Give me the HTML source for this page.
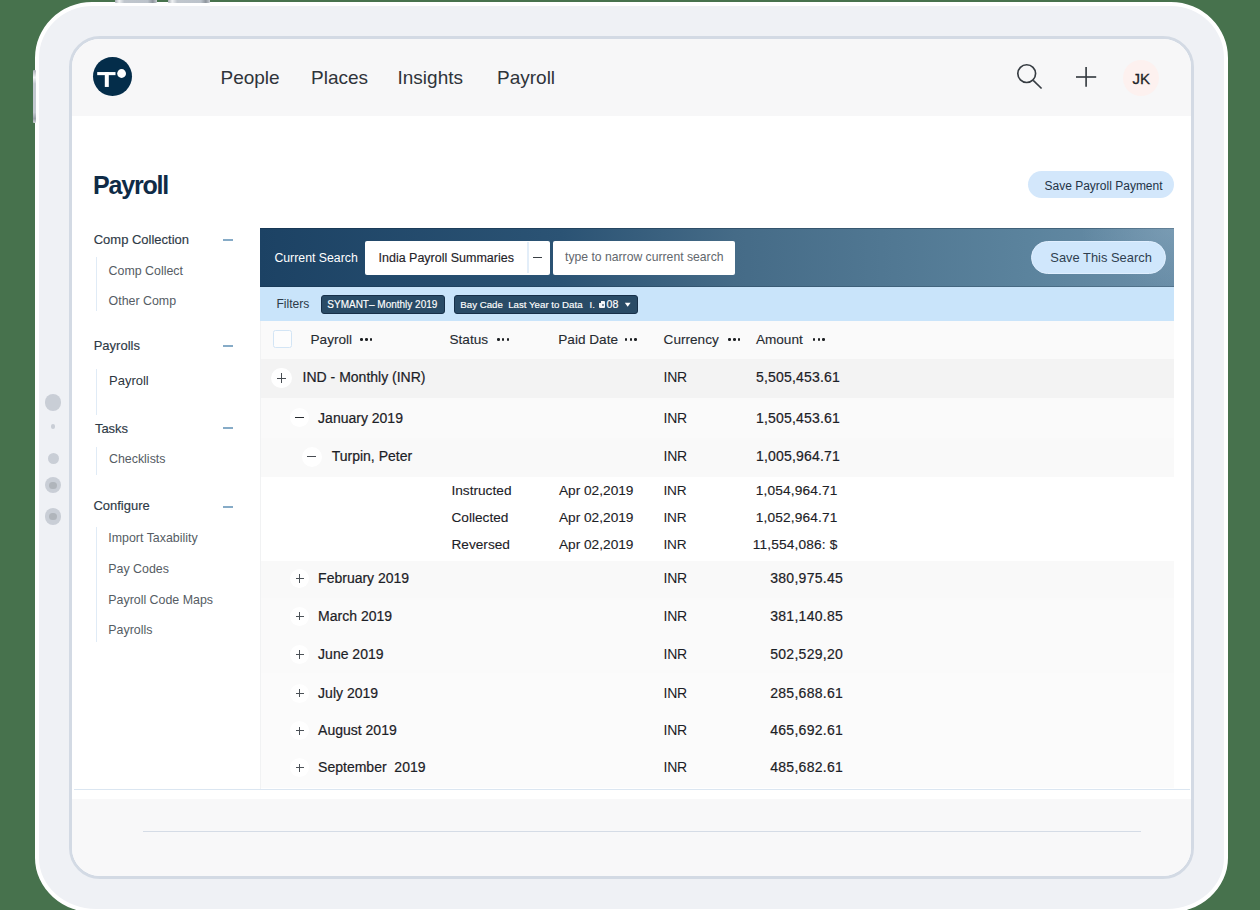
<!DOCTYPE html>
<html><head><meta charset="utf-8"><style>
html,body{margin:0;padding:0;}
body{width:1260px;height:910px;overflow:hidden;position:relative;background:#47724d;font-family:"Liberation Sans",sans-serif;}
.r{position:absolute;box-sizing:border-box;}
.t{position:absolute;line-height:1;white-space:nowrap;}
</style></head><body>
<div class="r" style="left:35px;top:1.5px;width:1193.00px;height:911.00px;background:#eff1f5;border:4px solid #fff;border-radius:57px 57px 61px 61px / 56px 56px 55px 55px;"></div>
<div class="r" style="left:115px;top:0px;width:42.00px;height:2.80px;background:linear-gradient(90deg,#a9afb6,#eef0f2 10%,#c0c6cd 22%,#bcc3cb 78%,#8f969e 90%,#c8cdd3);border-radius:0 0 1px 1px;"></div>
<div class="r" style="left:168px;top:0px;width:42.00px;height:2.80px;background:linear-gradient(90deg,#a9afb6,#eef0f2 10%,#c0c6cd 22%,#bcc3cb 78%,#8f969e 90%,#c8cdd3);border-radius:0 0 1px 1px;"></div>
<div class="r" style="left:32.8px;top:70px;width:3.00px;height:53.00px;background:linear-gradient(180deg,#a9afb6,#f2f4f6 14%,#c3c9d0 26%,#c3c9d0 80%,#9aa1a8 92%,#d0d4d9);border-radius:1px;"></div>
<div class="r" style="left:69px;top:36px;width:1125.00px;height:842.50px;background:#ffffff;border:3px solid #d3dae4;border-radius:31px;overflow:hidden;"></div>
<div class="r" style="left:72px;top:39px;width:1119.00px;height:76.80px;background:#f7f7f8;border-radius:28px 28px 0 0;"></div>
<div class="r" style="left:72px;top:799px;width:1119.00px;height:76.50px;background:#f8f8f9;border-radius:0 0 28px 28px;"></div>
<div class="r" style="left:143px;top:830.5px;width:998.00px;height:1.50px;background:#d5dce6;"></div>
<svg class="r" style="left:92px;top:56px" width="41" height="41" viewBox="0 0 41 41"><circle cx="20.5" cy="20.4" r="19.5" fill="#042d4a"/><rect x="5.2" y="16.05" width="18.3" height="3.1" fill="#fff"/><rect x="12.8" y="16.05" width="4" height="14.9" fill="#fff"/><circle cx="29.6" cy="17.5" r="4.4" fill="#fff"/></svg>
<div class="t" style="top:67.52px;font-size:19px;color:#2f343a;left:220.50px;">People</div>
<div class="t" style="top:67.52px;font-size:19px;color:#2f343a;left:311.00px;">Places</div>
<div class="t" style="top:67.52px;font-size:19px;color:#2f343a;left:397.50px;">Insights</div>
<div class="t" style="top:67.52px;font-size:19px;color:#2f343a;left:497.00px;">Payroll</div>
<svg class="r" style="left:1010px;top:58px" width="40" height="40" viewBox="0 0 40 40"><circle cx="16.7" cy="15.6" r="8.9" fill="none" stroke="#363c42" stroke-width="1.65"/><line x1="23.2" y1="22.3" x2="31.6" y2="30.5" stroke="#363c42" stroke-width="1.65"/></svg>
<svg class="r" style="left:1066px;top:57px" width="40" height="40" viewBox="0 0 40 40"><line x1="10" y1="20" x2="30.2" y2="20" stroke="#363c42" stroke-width="1.65"/><line x1="20.1" y1="10" x2="20.1" y2="29.8" stroke="#363c42" stroke-width="1.65"/></svg>
<div class="r" style="left:1123.00px;top:60.00px;width:36.00px;height:36.00px;border-radius:50%;background:#fdf1ef;"></div>
<div class="t" style="top:71.10px;font-size:15px;color:#1f2327;left:1132.40px;-webkit-text-stroke:0.3px #1f2327;">JK</div>
<div class="t" style="top:172.84px;font-size:25px;color:#0f2b47;font-weight:700;letter-spacing:-1.2px;left:93.00px;">Payroll</div>
<div class="r" style="left:1028px;top:171px;width:146.00px;height:26.70px;background:#d3e7fb;border-radius:14px;"></div>
<div class="t" style="top:180.24px;font-size:12px;color:#243447;left:1044.50px;">Save Payroll Payment</div>
<div class="t" style="top:233.40px;font-size:13px;color:#2e3a46;left:93.70px;-webkit-text-stroke:0.15px #2e3a46;">Comp Collection</div>
<div class="r" style="left:223.0px;top:239px;width:9.80px;height:2.00px;background:#86abc7;"></div>
<div class="r" style="left:95.5px;top:256.7px;width:1.50px;height:54.30px;background:#e0ebf6;"></div>
<div class="t" style="top:264.60px;font-size:12.4px;color:#555c64;left:108.60px;">Comp Collect</div>
<div class="t" style="top:295.00px;font-size:12.4px;color:#555c64;left:108.60px;">Other Comp</div>
<div class="t" style="top:338.90px;font-size:13px;color:#2e3a46;left:93.70px;-webkit-text-stroke:0.15px #2e3a46;">Payrolls</div>
<div class="r" style="left:223.0px;top:345px;width:9.80px;height:2.00px;background:#86abc7;"></div>
<div class="r" style="left:95.5px;top:369.2px;width:1.50px;height:45.70px;background:#e0ebf6;"></div>
<div class="t" style="top:373.70px;font-size:13px;color:#2d3640;left:109.00px;">Payroll</div>
<div class="t" style="top:421.50px;font-size:13px;color:#2e3a46;left:94.90px;-webkit-text-stroke:0.15px #2e3a46;">Tasks</div>
<div class="r" style="left:223.0px;top:427px;width:9.80px;height:2.00px;background:#86abc7;"></div>
<div class="r" style="left:95.5px;top:447.4px;width:1.50px;height:28.10px;background:#e0ebf6;"></div>
<div class="t" style="top:453.30px;font-size:12.4px;color:#555c64;left:109.00px;">Checklists</div>
<div class="t" style="top:499.10px;font-size:13px;color:#2e3a46;left:93.40px;-webkit-text-stroke:0.15px #2e3a46;">Configure</div>
<div class="r" style="left:223.0px;top:506px;width:9.80px;height:2.00px;background:#86abc7;"></div>
<div class="r" style="left:95.5px;top:527px;width:1.50px;height:115.20px;background:#e0ebf6;"></div>
<div class="t" style="top:531.80px;font-size:12.4px;color:#555c64;left:108.30px;">Import Taxability</div>
<div class="t" style="top:562.50px;font-size:12.4px;color:#555c64;left:108.30px;">Pay Codes</div>
<div class="t" style="top:593.50px;font-size:12.4px;color:#555c64;left:108.30px;">Payroll Code Maps</div>
<div class="t" style="top:624.40px;font-size:12.4px;color:#555c64;left:108.30px;">Payrolls</div>
<div class="r" style="left:44.85px;top:394.05px;width:16.50px;height:16.50px;border-radius:50%;background:#c9ced6;"></div>
<div class="r" style="left:50.80px;top:424.30px;width:4.60px;height:4.60px;border-radius:50%;background:#c9ced6;"></div>
<div class="r" style="left:47.60px;top:452.60px;width:11.00px;height:11.00px;border-radius:50%;background:#c9ced6;"></div>
<div class="r" style="left:44.90px;top:477.00px;width:16.40px;height:16.40px;border-radius:50%;background:#c9ced6;"></div>
<div class="r" style="left:49.40px;top:481.50px;width:7.40px;height:7.40px;border-radius:50%;background:#b0b5bb;"></div>
<div class="r" style="left:44.90px;top:508.30px;width:16.40px;height:16.40px;border-radius:50%;background:#c9ced6;"></div>
<div class="r" style="left:49.40px;top:512.80px;width:7.40px;height:7.40px;border-radius:50%;background:#b0b5bb;"></div>
<div class="r" style="left:260px;top:228px;width:914.00px;height:59.00px;background:linear-gradient(90deg,#1c4264 0%,#2b5374 33%,#456b87 52%,#5b839d 84%,#6a8ea8 100%);"></div>
<div class="r" style="left:260px;top:228px;width:914.00px;height:1.00px;background:rgba(15,35,55,0.35);"></div>
<div class="r" style="left:260px;top:286px;width:914.00px;height:1.00px;background:rgba(15,35,55,0.25);"></div>
<div class="r" style="left:1080px;top:228px;width:94.00px;height:59.00px;background:radial-gradient(ellipse at 100% 0%, rgba(150,180,200,0.35), rgba(150,180,200,0) 70%);"></div>
<div class="t" style="top:252.39px;font-size:12.3px;color:#ffffff;left:274.40px;">Current Search</div>
<div class="r" style="left:365px;top:241px;width:185.00px;height:33.50px;background:#fff;border-radius:2px;"></div>
<div class="r" style="left:527.3px;top:242px;width:1.60px;height:30.80px;background:#e3eef9;"></div>
<div class="r" style="left:533px;top:256.6px;width:8.90px;height:1.30px;background:#3a3f44;"></div>
<div class="t" style="top:252.12px;font-size:12.5px;color:#1f2329;left:378.50px;-webkit-text-stroke:0.15px #1f2329;">India Payroll Summaries</div>
<div class="r" style="left:552.5px;top:241px;width:182.50px;height:33.50px;background:#fff;border-radius:2px;"></div>
<div class="t" style="top:251.47px;font-size:12.2px;color:#62676d;left:565.00px;">type to narrow current search</div>
<div class="r" style="left:1031.3px;top:240.8px;width:135.10px;height:33.20px;background:#d0e7fc;border:1px solid #e0efff;border-radius:17px;"></div>
<div class="t" style="top:251.78px;font-size:12.9px;color:#2f3f50;left:1050.30px;">Save This Search</div>
<div class="r" style="left:260px;top:287px;width:914.00px;height:33.50px;background:#c9e4fa;"></div>
<div class="t" style="top:297.66px;font-size:12.1px;color:#2d3a48;left:276.40px;">Filters</div>
<div class="r" style="left:321px;top:295.2px;width:124.00px;height:19.10px;background:#294b66;border:1px solid #173049;border-radius:3px;"></div>
<div class="t" style="top:299.84px;font-size:10px;color:#ffffff;left:327.30px;-webkit-text-stroke:0.15px #fff;">SYMANT– Monthly 2019</div>
<div class="r" style="left:454px;top:295.3px;width:183.60px;height:19.00px;background:#294b66;border:1px solid #173049;border-radius:3px;"></div>
<div class="t" style="top:300.09px;font-size:9.7px;color:#ffffff;left:460.30px;-webkit-text-stroke:0.15px #fff;">Bay Cade&nbsp; Last Year to Data</div>
<div class="t" style="top:300.09px;font-size:9.7px;color:#ffffff;left:589.50px;-webkit-text-stroke:0.15px #fff;">I.</div>
<div class="r" style="left:599.3px;top:300.6px;width:6.00px;height:7.70px;background:#f4f6f8;border-radius:1px;"></div>
<div class="r" style="left:601.5px;top:304.2px;width:2.00px;height:2.20px;background:#8193a3;"></div>
<div class="r" style="left:599.3px;top:300.6px;width:1.90px;height:2.60px;background:#294b66;"></div>
<div class="t" style="top:299.33px;font-size:10.6px;color:#ffffff;left:606.50px;-webkit-text-stroke:0.2px #fff;">08</div>
<svg class="r" style="left:624px;top:302px" width="8" height="6" viewBox="0 0 8 6"><path d="M0.8 0.8 L3.7 4.8 L6.6 0.8 Z" fill="#fff"/></svg>
<div class="r" style="left:260px;top:320.5px;width:914.00px;height:468.50px;background:#ffffff;"></div>
<div class="r" style="left:260px;top:320.5px;width:1.00px;height:468.50px;background:#f1f2f3;"></div>
<div class="r" style="left:74px;top:788.8px;width:1115.50px;height:1.00px;background:#dbe6f1;"></div>
<div class="r" style="left:261px;top:320.5px;width:913.00px;height:38.00px;background:#fafafa;"></div>
<div class="r" style="left:261px;top:358.5px;width:913.00px;height:39.30px;background:#f3f3f3;"></div>
<div class="r" style="left:261px;top:397.8px;width:913.00px;height:39.80px;background:#fafafa;"></div>
<div class="r" style="left:261px;top:437.6px;width:913.00px;height:39.70px;background:#f9f9f9;"></div>
<div class="r" style="left:261px;top:477.3px;width:913.00px;height:83.20px;background:#ffffff;"></div>
<div class="r" style="left:261px;top:560.5px;width:913.00px;height:37.80px;background:#f9f9f9;"></div>
<div class="r" style="left:261px;top:597.8px;width:913.00px;height:1.00px;background:#f3f4f5;"></div>
<div class="r" style="left:261px;top:598.3px;width:913.00px;height:38.10px;background:#fafafa;"></div>
<div class="r" style="left:261px;top:635.9px;width:913.00px;height:1.00px;background:#f3f4f5;"></div>
<div class="r" style="left:261px;top:636.4px;width:913.00px;height:36.90px;background:#fafafa;"></div>
<div class="r" style="left:261px;top:672.8px;width:913.00px;height:1.00px;background:#f3f4f5;"></div>
<div class="r" style="left:261px;top:673.3px;width:913.00px;height:38.10px;background:#fbfbfb;"></div>
<div class="r" style="left:261px;top:710.9px;width:913.00px;height:1.00px;background:#f3f4f5;"></div>
<div class="r" style="left:261px;top:711.4px;width:913.00px;height:36.90px;background:#fbfbfb;"></div>
<div class="r" style="left:261px;top:747.8px;width:913.00px;height:1.00px;background:#f3f4f5;"></div>
<div class="r" style="left:261px;top:748.3px;width:913.00px;height:40.20px;background:#fbfbfb;"></div>
<div class="r" style="left:273.2px;top:330.3px;width:18.50px;height:18.00px;background:#fdfdfd;border:1px solid #d3e5f5;border-radius:2.5px;"></div>
<div class="t" style="top:332.69px;font-size:13.6px;color:#262b31;left:310.50px;-webkit-text-stroke:0.12px #262b31;">Payroll</div>
<div class="r" style="left:360.45px;top:338.35px;width:2.50px;height:2.50px;border-radius:50%;background:#1c1f22;"></div>
<div class="r" style="left:365.20px;top:338.35px;width:2.50px;height:2.50px;border-radius:50%;background:#1c1f22;"></div>
<div class="r" style="left:369.95px;top:338.35px;width:2.50px;height:2.50px;border-radius:50%;background:#1c1f22;"></div>
<div class="t" style="top:332.69px;font-size:13.6px;color:#262b31;left:449.50px;-webkit-text-stroke:0.12px #262b31;">Status</div>
<div class="r" style="left:497.05px;top:338.35px;width:2.50px;height:2.50px;border-radius:50%;background:#1c1f22;"></div>
<div class="r" style="left:501.80px;top:338.35px;width:2.50px;height:2.50px;border-radius:50%;background:#1c1f22;"></div>
<div class="r" style="left:506.55px;top:338.35px;width:2.50px;height:2.50px;border-radius:50%;background:#1c1f22;"></div>
<div class="t" style="top:332.69px;font-size:13.6px;color:#262b31;left:558.30px;-webkit-text-stroke:0.12px #262b31;">Paid Date</div>
<div class="r" style="left:624.95px;top:338.35px;width:2.50px;height:2.50px;border-radius:50%;background:#1c1f22;"></div>
<div class="r" style="left:629.70px;top:338.35px;width:2.50px;height:2.50px;border-radius:50%;background:#1c1f22;"></div>
<div class="r" style="left:634.45px;top:338.35px;width:2.50px;height:2.50px;border-radius:50%;background:#1c1f22;"></div>
<div class="t" style="top:332.69px;font-size:13.6px;color:#262b31;left:663.60px;-webkit-text-stroke:0.12px #262b31;">Currency</div>
<div class="r" style="left:728.25px;top:338.35px;width:2.50px;height:2.50px;border-radius:50%;background:#1c1f22;"></div>
<div class="r" style="left:733.00px;top:338.35px;width:2.50px;height:2.50px;border-radius:50%;background:#1c1f22;"></div>
<div class="r" style="left:737.75px;top:338.35px;width:2.50px;height:2.50px;border-radius:50%;background:#1c1f22;"></div>
<div class="t" style="top:332.69px;font-size:13.6px;color:#262b31;left:755.90px;-webkit-text-stroke:0.12px #262b31;">Amount</div>
<div class="r" style="left:812.95px;top:338.35px;width:2.50px;height:2.50px;border-radius:50%;background:#1c1f22;"></div>
<div class="r" style="left:817.70px;top:338.35px;width:2.50px;height:2.50px;border-radius:50%;background:#1c1f22;"></div>
<div class="r" style="left:822.45px;top:338.35px;width:2.50px;height:2.50px;border-radius:50%;background:#1c1f22;"></div>
<div class="r" style="left:271.20px;top:367.70px;width:20.80px;height:20.80px;border-radius:50%;background:#ffffff;"></div>
<div class="r" style="left:276.70000000000005px;top:377.55px;width:9.80px;height:1.10px;background:#474c52;"></div>
<div class="r" style="left:281.05px;top:373.20000000000005px;width:1.10px;height:9.80px;background:#474c52;"></div>
<div class="t" style="top:370.45px;font-size:14px;color:#1c2126;left:302.60px;-webkit-text-stroke:0.2px #1c2126;">IND - Monthly (INR)</div>
<div class="t" style="top:370.15px;font-size:14px;color:#1c2126;letter-spacing:-0.3px;left:663.60px;">INR</div>
<div class="t" style="top:370.15px;font-size:14px;color:#1c2126;letter-spacing:0.2px;left:755.90px;-webkit-text-stroke:0.2px #1c2126;">5,505,453.61</div>
<div class="r" style="left:289.80px;top:407.80px;width:19.60px;height:19.60px;border-radius:50%;background:#ffffff;"></div>
<div class="r" style="left:295.20000000000005px;top:416.88px;width:8.80px;height:1.44px;background:#25292e;"></div>
<div class="t" style="top:410.55px;font-size:14px;color:#1c2126;left:318.10px;-webkit-text-stroke:0.2px #1c2126;">January 2019</div>
<div class="t" style="top:410.55px;font-size:14px;color:#1c2126;letter-spacing:-0.3px;left:663.60px;">INR</div>
<div class="t" style="top:410.55px;font-size:14px;color:#1c2126;letter-spacing:0.2px;left:755.90px;-webkit-text-stroke:0.2px #1c2126;">1,505,453.61</div>
<div class="r" style="left:301.70px;top:446.90px;width:20.00px;height:20.00px;border-radius:50%;background:#ffffff;"></div>
<div class="r" style="left:307.2px;top:456.29999999999995px;width:9.00px;height:1.20px;background:#474c52;"></div>
<div class="t" style="top:449.15px;font-size:14px;color:#1c2126;left:331.70px;-webkit-text-stroke:0.2px #1c2126;">Turpin, Peter</div>
<div class="t" style="top:449.15px;font-size:14px;color:#1c2126;letter-spacing:-0.3px;left:663.60px;">INR</div>
<div class="t" style="top:449.15px;font-size:14px;color:#1c2126;letter-spacing:0.2px;left:755.90px;-webkit-text-stroke:0.2px #1c2126;">1,005,964.71</div>
<div class="t" style="top:484.20px;font-size:13.7px;color:#1c2126;left:451.40px;-webkit-text-stroke:0.1px #1c2126;">Instructed</div>
<div class="t" style="top:484.20px;font-size:13.7px;color:#1c2126;left:558.90px;-webkit-text-stroke:0.1px #1c2126;">Apr 02,2019</div>
<div class="t" style="top:484.20px;font-size:13.7px;color:#1c2126;letter-spacing:-0.3px;left:663.60px;">INR</div>
<div class="t" style="top:484.20px;font-size:13.7px;color:#1c2126;letter-spacing:0.15px;right:422.50px;-webkit-text-stroke:0.15px #1c2126;">1,054,964.71</div>
<div class="t" style="top:511.00px;font-size:13.7px;color:#1c2126;left:451.40px;-webkit-text-stroke:0.1px #1c2126;">Collected</div>
<div class="t" style="top:511.00px;font-size:13.7px;color:#1c2126;left:558.90px;-webkit-text-stroke:0.1px #1c2126;">Apr 02,2019</div>
<div class="t" style="top:511.00px;font-size:13.7px;color:#1c2126;letter-spacing:-0.3px;left:663.60px;">INR</div>
<div class="t" style="top:511.00px;font-size:13.7px;color:#1c2126;letter-spacing:0.15px;right:422.50px;-webkit-text-stroke:0.15px #1c2126;">1,052,964.71</div>
<div class="t" style="top:537.60px;font-size:13.7px;color:#1c2126;left:451.40px;-webkit-text-stroke:0.1px #1c2126;">Reversed</div>
<div class="t" style="top:537.60px;font-size:13.7px;color:#1c2126;left:558.90px;-webkit-text-stroke:0.1px #1c2126;">Apr 02,2019</div>
<div class="t" style="top:537.60px;font-size:13.7px;color:#1c2126;letter-spacing:-0.3px;left:663.60px;">INR</div>
<div class="t" style="top:537.60px;font-size:13.7px;color:#1c2126;letter-spacing:0.15px;right:422.50px;-webkit-text-stroke:0.15px #1c2126;">11,554,086: $</div>
<div class="r" style="left:290.20px;top:568.90px;width:19.20px;height:19.20px;border-radius:50%;background:#ffffff;"></div>
<div class="r" style="left:295.7px;top:577.95px;width:8.20px;height:1.10px;background:#4b5157;"></div>
<div class="r" style="left:299.25px;top:574.4px;width:1.10px;height:8.20px;background:#4b5157;"></div>
<div class="t" style="top:570.55px;font-size:14px;color:#1c2126;left:318.10px;-webkit-text-stroke:0.2px #1c2126;">February 2019</div>
<div class="t" style="top:570.55px;font-size:14px;color:#1c2126;letter-spacing:-0.3px;left:663.60px;">INR</div>
<div class="t" style="top:570.55px;font-size:14px;color:#1c2126;letter-spacing:0.3px;right:416.80px;-webkit-text-stroke:0.2px #1c2126;">380,975.45</div>
<div class="r" style="left:290.20px;top:606.80px;width:19.20px;height:19.20px;border-radius:50%;background:#ffffff;"></div>
<div class="r" style="left:295.7px;top:615.8500000000001px;width:8.20px;height:1.10px;background:#4b5157;"></div>
<div class="r" style="left:299.25px;top:612.3000000000001px;width:1.10px;height:8.20px;background:#4b5157;"></div>
<div class="t" style="top:609.15px;font-size:14px;color:#1c2126;left:318.10px;-webkit-text-stroke:0.2px #1c2126;">March 2019</div>
<div class="t" style="top:609.15px;font-size:14px;color:#1c2126;letter-spacing:-0.3px;left:663.60px;">INR</div>
<div class="t" style="top:609.15px;font-size:14px;color:#1c2126;letter-spacing:0.3px;right:416.80px;-webkit-text-stroke:0.2px #1c2126;">381,140.85</div>
<div class="r" style="left:290.20px;top:644.90px;width:19.20px;height:19.20px;border-radius:50%;background:#ffffff;"></div>
<div class="r" style="left:295.7px;top:653.95px;width:8.20px;height:1.10px;background:#4b5157;"></div>
<div class="r" style="left:299.25px;top:650.4px;width:1.10px;height:8.20px;background:#4b5157;"></div>
<div class="t" style="top:647.15px;font-size:14px;color:#1c2126;left:318.10px;-webkit-text-stroke:0.2px #1c2126;">June 2019</div>
<div class="t" style="top:647.15px;font-size:14px;color:#1c2126;letter-spacing:-0.3px;left:663.60px;">INR</div>
<div class="t" style="top:647.15px;font-size:14px;color:#1c2126;letter-spacing:0.3px;right:416.80px;-webkit-text-stroke:0.2px #1c2126;">502,529,20</div>
<div class="r" style="left:290.20px;top:683.70px;width:19.20px;height:19.20px;border-radius:50%;background:#ffffff;"></div>
<div class="r" style="left:295.7px;top:692.7500000000001px;width:8.20px;height:1.10px;background:#4b5157;"></div>
<div class="r" style="left:299.25px;top:689.2px;width:1.10px;height:8.20px;background:#4b5157;"></div>
<div class="t" style="top:686.05px;font-size:14px;color:#1c2126;left:318.10px;-webkit-text-stroke:0.2px #1c2126;">July 2019</div>
<div class="t" style="top:686.05px;font-size:14px;color:#1c2126;letter-spacing:-0.3px;left:663.60px;">INR</div>
<div class="t" style="top:686.05px;font-size:14px;color:#1c2126;letter-spacing:0.3px;right:416.80px;-webkit-text-stroke:0.2px #1c2126;">285,688.61</div>
<div class="r" style="left:290.20px;top:721.10px;width:19.20px;height:19.20px;border-radius:50%;background:#ffffff;"></div>
<div class="r" style="left:295.7px;top:730.1500000000001px;width:8.20px;height:1.10px;background:#4b5157;"></div>
<div class="r" style="left:299.25px;top:726.6px;width:1.10px;height:8.20px;background:#4b5157;"></div>
<div class="t" style="top:722.95px;font-size:14px;color:#1c2126;left:318.10px;-webkit-text-stroke:0.2px #1c2126;">August 2019</div>
<div class="t" style="top:722.95px;font-size:14px;color:#1c2126;letter-spacing:-0.3px;left:663.60px;">INR</div>
<div class="t" style="top:722.95px;font-size:14px;color:#1c2126;letter-spacing:0.3px;right:416.80px;-webkit-text-stroke:0.2px #1c2126;">465,692.61</div>
<div class="r" style="left:290.20px;top:758.00px;width:19.20px;height:19.20px;border-radius:50%;background:#ffffff;"></div>
<div class="r" style="left:295.7px;top:767.0500000000001px;width:8.20px;height:1.10px;background:#4b5157;"></div>
<div class="r" style="left:299.25px;top:763.5px;width:1.10px;height:8.20px;background:#4b5157;"></div>
<div class="t" style="top:760.25px;font-size:14px;color:#1c2126;left:318.10px;-webkit-text-stroke:0.2px #1c2126;">September&nbsp; 2019</div>
<div class="t" style="top:760.25px;font-size:14px;color:#1c2126;letter-spacing:-0.3px;left:663.60px;">INR</div>
<div class="t" style="top:760.25px;font-size:14px;color:#1c2126;letter-spacing:0.3px;right:416.80px;-webkit-text-stroke:0.2px #1c2126;">485,682.61</div>
</body></html>
